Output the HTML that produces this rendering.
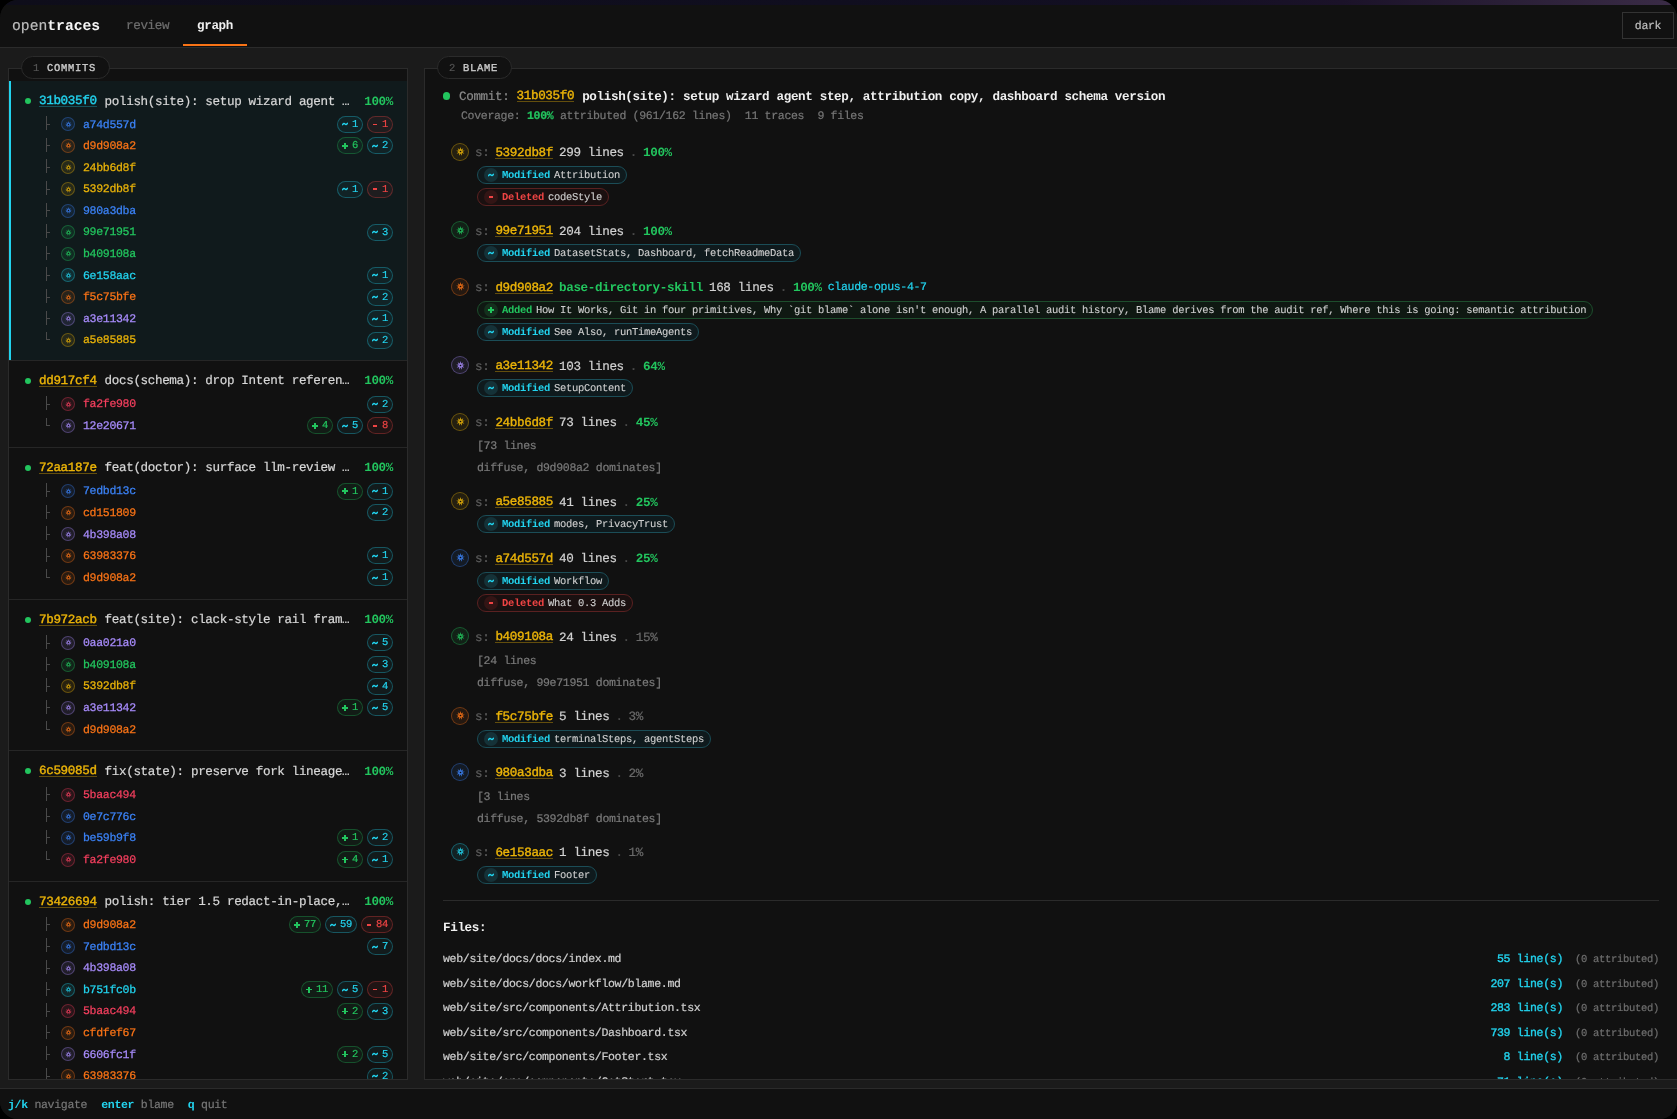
<!DOCTYPE html>
<html><head><meta charset="utf-8">
<style>
@font-face{font-family:"Liberation Mono";src:local("Liberation Mono"),local("LiberationMono");font-weight:400;ascent-override:102%;descent-override:30%;line-gap-override:0%}
@font-face{font-family:"Liberation Mono";src:local("Liberation Mono Bold"),local("LiberationMono-Bold");font-weight:700;ascent-override:102%;descent-override:30%;line-gap-override:0%}
*{box-sizing:border-box;margin:0;padding:0}
html,body{width:1677px;height:1119px;background:#000;overflow:hidden}
body{-webkit-font-smoothing:antialiased;text-rendering:geometricPrecision;-webkit-text-stroke:0.2px currentColor;font-family:"Liberation Mono",monospace;color:#d4d4d4;font-size:12.6px;letter-spacing:-0.36px}
.win{position:absolute;left:0;top:0;width:1677px;height:1119px;border-radius:18px;overflow:hidden;background:#111111;will-change:transform}
.topband{position:absolute;left:0;top:0;width:1677px;height:5px;background:linear-gradient(90deg,#0e0d1a 0%,#100e1f 50%,#130f23 70%,#1b1229 80%,#2a1f37 90%,#3b2c47 100%)}
.hdr{position:absolute;left:0;top:5px;width:1677px;height:43px;border-bottom:1px solid #2b2b2b;background:#111111}
.brand{position:absolute;left:12px;top:11.5px;font-size:14.7px;letter-spacing:-0.42px;line-height:18px;color:#bdbdbd;letter-spacing:0}
.brand b{color:#f5f5f5;font-weight:700}
.tab{position:absolute;top:0;height:42px;line-height:40px;font-size:12.6px;letter-spacing:-0.36px;padding:0 14px}
.t1{left:112px;color:#6f6f6f}
.t2{left:183px;color:#f0f0f0;font-weight:700}
.t2:after{content:"";position:absolute;left:0;right:0;top:39px;height:2px;background:#f97316}
.dark{position:absolute;left:1622px;top:7px;width:52px;height:27px;border:1px solid #333;font-size:11.55px;letter-spacing:-0.33px;line-height:26px;text-align:center;color:#bdbdbd}
.main{position:absolute;left:0;top:48px;width:1677px;height:1040px;background:#1b1b1b}
.panel{position:absolute;top:20px;border:1px solid #2b2b2b;background:#111111;overflow:hidden}
.pl{left:8px;width:400px;height:1012px}
.prt{left:424px;width:1260px;height:1012px}
.legend{position:absolute;top:8px;height:23px;border:1px solid #2b2b2b;border-radius:12px;background:#111111;font-size:10.5px;line-height:23px;padding:0 12.5px 0 11px;letter-spacing:0.7px;color:#c8c8c8;font-weight:400;-webkit-text-stroke:0.35px currentColor;z-index:5}
.legend i{font-style:normal;color:#555;font-weight:400;-webkit-text-stroke:0.2px currentColor}
.lg1{left:21px}.lg2{left:437px}
.list{position:absolute;left:0;top:12px;width:398px}
.commit{position:relative;padding:9.5px 14px 10.3px 16px;border-bottom:1px solid #262626}
.commit.sel{background:#101a1c;padding-bottom:8.9px}
.commit.sel:before{content:"";position:absolute;left:0;top:0;bottom:0;width:2px;background:#22d3ee}
.ch{height:23px;display:flex;align-items:center;gap:8px;line-height:23px}
.dot{width:6px;height:6px;border-radius:3px;background:#22c55e;flex:none;position:relative;top:-1px}
.hash{color:#eab308;font-weight:400;-webkit-text-stroke:0.4px currentColor;line-height:14px;flex:none;position:relative;top:-2px}
.hash:after{content:"";position:absolute;left:0;right:0;top:13px;height:1px;background:rgba(234,179,8,.38)}
.sel .hash{color:#22d3ee}.sel .hash:after{background:rgba(34,211,238,.3)}
.msg{flex:1;white-space:nowrap;overflow:hidden;color:#d8d8d8;position:relative;top:-2px}
.pct{color:#22c55e;font-weight:700;flex:none;position:relative;top:-2px}
.kid{position:relative;height:21.6px;line-height:21.6px;font-size:11.55px;letter-spacing:-0.33px}
.tr{position:absolute;left:21px;top:2.75px;width:1px;height:14px;background:#4a4a4a}
.tr:after{content:"";position:absolute;left:1px;top:7.6px;width:3px;height:1px;background:#4a4a4a}
.tr.last{height:8.5px;top:2.5px}
.tr.last:after{top:7.5px}
.av{position:absolute;left:36px;top:3.8px;width:14px;height:14px;border-radius:7px;border:1px solid color-mix(in srgb,var(--c) 34%,transparent);background:color-mix(in srgb,var(--c) 10%,transparent);display:flex;align-items:center;justify-content:center}
.av svg{width:7px;height:7px;opacity:.75}
.kh{position:absolute;left:58px;top:0;font-weight:400;-webkit-text-stroke:0.25px currentColor}
.pills{position:absolute;right:0;top:2.3px;display:flex;gap:4px}
.pill{height:17px;border-radius:999px;border:1px solid;padding:0 4px;display:flex;align-items:center;gap:4px;font-size:10.5px;letter-spacing:-0.3px;line-height:15px}
.pill b,.pill i{font-style:normal;font-weight:400}
.tl{display:block;width:6px;height:4px}
.mn{display:block;width:4px;height:1.5px;background:currentColor;margin:0 1px}
.plus{display:block;width:6px;height:6px;position:relative}.plus:before,.plus:after{content:"";position:absolute;background:currentColor}.plus:before{left:0;top:2.25px;width:6px;height:1.5px}.plus:after{left:2.25px;top:0;width:1.5px;height:6px}
.pg{color:#22c55e;border-color:rgba(34,197,94,.32);background:rgba(34,197,94,.06)}
.pc{color:#22d3ee;border-color:rgba(34,211,238,.32);background:rgba(34,211,238,.05)}
.prd{color:#ef4444}
.pill.prd{border-color:rgba(239,68,68,.32);background:rgba(239,68,68,.07)}
.bcontent{position:absolute;left:18px;top:0;width:1216px}
.bc{position:relative;height:27px;margin-top:13px;font-size:12.6px;letter-spacing:-0.36px;line-height:27px;display:flex;align-items:center;white-space:nowrap}
.bc .dot{width:7px;height:8px;border-radius:4px;margin-right:9px;top:0}
.bc .lab{color:#8a8a8a;margin-right:7.2px}
.bc .hash{color:#eab308;margin-right:8px;top:-1px}
.bc .title{color:#f0f0f0;font-weight:700}
.cov{font-size:11.55px;letter-spacing:-0.33px;color:#777;height:20px;line-height:20px;margin-top:-3px;white-space:pre;padding-left:18px}
.cov .g{color:#22c55e;font-weight:700}
.bis{margin-top:16.75px;padding-left:8px;padding-bottom:0.75px}
.bi{margin-bottom:11px}
.bhd{height:18px;display:flex;align-items:center;gap:6px;font-size:12.6px;letter-spacing:-0.36px;white-space:nowrap}
.bav{width:18px;height:18px;border-radius:9px;border:1px solid color-mix(in srgb,var(--c) 36%,transparent);background:color-mix(in srgb,var(--c) 9%,transparent);display:flex;align-items:center;justify-content:center;flex:none}
.bav svg{width:9px;height:9px;opacity:.85}
.s{color:#5e5e5e}
.bh{color:#eab308;font-weight:400;-webkit-text-stroke:0.4px currentColor;line-height:14px;position:relative}
.bh:after{content:"";position:absolute;left:0;right:0;top:13px;height:1px;background:rgba(234,179,8,.38)}
.skill{color:#22c55e;font-weight:700}
.ln{color:#d2d2d2}
.dd{color:#4a4a4a}
.pgood{color:#22c55e;font-weight:700}
.pbad{color:#6a6a6a}
.model{color:#22d3ee;font-size:11.55px;letter-spacing:-0.33px}
.chgs{display:flex;flex-direction:column;align-items:flex-start;gap:4px;padding-top:5px;padding-bottom:4.5px;padding-left:26px}
.chg{height:18px;border:1px solid;border-radius:9px;display:inline-flex;align-items:center;font-size:10.5px;letter-spacing:-0.3px;padding:0 6px 0 6px;white-space:nowrap;vertical-align:top}
.chgs .chg{display:flex;width:max-content}
.ci{width:14px;height:14px;border-radius:7px;display:flex;align-items:center;justify-content:center;font-weight:700;margin-right:4px}
.cl{font-weight:700;margin-right:4px}
.ct{color:#cfcfcf;-webkit-text-stroke:0.1px currentColor}
.cm{border-color:#1b4d57;background:#0f1a1d;color:#22d3ee}
.cm .ci{background:#153238}
.ca{border-color:#1d4d2c;background:#0f1812;color:#22c55e}
.ca .ci{background:#14301d}
.cd{border-color:#5a2121;background:#1a1010;color:#ef4444}
.cd .ci{background:#331515}
.txt{padding-top:4.5px;padding-left:26px;font-size:11.55px;letter-spacing:-0.33px;color:#7a7a7a;line-height:22px;padding-bottom:2px}
.files{border-top:1px solid #2b2b2b;padding-top:15px}
.fh{font-weight:700;color:#f0f0f0;height:24px;line-height:22px;font-size:12.6px;letter-spacing:-0.36px;margin-bottom:7px}
.fr{height:24.5px;line-height:24.5px;display:flex;font-size:11.55px;letter-spacing:-0.33px;white-space:nowrap}
.fn{flex:1;color:#cfcfcf}
.fl{color:#22d3ee;font-weight:400;-webkit-text-stroke:0.35px currentColor}
.fa{color:#6f6f6f;font-size:10.5px;letter-spacing:-0.3px;margin-left:12px}
.status{position:absolute;left:0;top:1088px;width:1677px;height:31px;border-top:1px solid #2b2b2b;background:#111111;font-size:11.55px;letter-spacing:-0.33px;line-height:32px;padding-left:8px;white-space:pre;color:#777}
.status b{color:#22d3ee;font-weight:700}
.sg{margin-right:14px}
b,strong,[style*="700"]{}
.pct,.t2,.brand b,.title,.skill,.pgood,.cl,.fh,.status b,.ci{-webkit-text-stroke:0}
</style></head><body>
<div class="win">
<div class="topband"></div>
<div class="hdr">
  <div class="brand">open<b>traces</b></div>
  <div class="tab t1">review</div>
  <div class="tab t2">graph</div>
  <div class="dark">dark</div>
</div>
<div class="main">
  <div class="legend lg1"><i>1</i> COMMITS</div>
  <div class="legend lg2"><i>2</i> BLAME</div>
  <div class="panel pl"><div class="list"><div class="commit sel"><div class="ch"><span class="dot"></span><span class="hash">31b035f0</span><span class="msg">polish(site): setup wizard agent …</span><span class="pct">100%</span></div><div class="kid"><span class="tr"></span><span class="av" style="--c:#3b82f6"><svg width="7" height="7" viewBox="0 0 10 10"><path fill="#3b82f6" d="M5.00 0.10 L5.79 2.84 L8.15 1.25 L6.99 3.85 L9.83 4.15 L7.27 5.40 L9.24 7.45 L6.48 6.76 L6.68 9.60 L5.00 7.30 L3.32 9.60 L3.52 6.76 L0.76 7.45 L2.73 5.40 L0.17 4.15 L3.01 3.85 L1.85 1.25 L4.21 2.84Z"/><circle cx="5" cy="5" r="0.9" fill="#0c0c0c"/></svg></span><span class="kh" style="color:#3b82f6">a74d557d</span><span class="pills"><span class="pill pc"><b><svg class="tl" viewBox="0 0 6 4"><path d="M0.6 2.7 C1.4 1.2 2.3 1.2 3 2 C3.7 2.8 4.6 2.8 5.4 1.3" fill="none" stroke="currentColor" stroke-width="1.45" stroke-linecap="round"/></svg></b><i>1</i></span><span class="pill prd"><b><span class="mn"></span></b><i>1</i></span></span></div><div class="kid"><span class="tr"></span><span class="av" style="--c:#f97316"><svg width="7" height="7" viewBox="0 0 10 10"><path fill="#f97316" d="M5.00 0.10 L5.79 2.84 L8.15 1.25 L6.99 3.85 L9.83 4.15 L7.27 5.40 L9.24 7.45 L6.48 6.76 L6.68 9.60 L5.00 7.30 L3.32 9.60 L3.52 6.76 L0.76 7.45 L2.73 5.40 L0.17 4.15 L3.01 3.85 L1.85 1.25 L4.21 2.84Z"/><circle cx="5" cy="5" r="0.9" fill="#0c0c0c"/></svg></span><span class="kh" style="color:#f97316">d9d908a2</span><span class="pills"><span class="pill pg"><b><span class="plus"></span></b><i>6</i></span><span class="pill pc"><b><svg class="tl" viewBox="0 0 6 4"><path d="M0.6 2.7 C1.4 1.2 2.3 1.2 3 2 C3.7 2.8 4.6 2.8 5.4 1.3" fill="none" stroke="currentColor" stroke-width="1.45" stroke-linecap="round"/></svg></b><i>2</i></span></span></div><div class="kid"><span class="tr"></span><span class="av" style="--c:#eab308"><svg width="7" height="7" viewBox="0 0 10 10"><path fill="#eab308" d="M5.00 0.10 L5.79 2.84 L8.15 1.25 L6.99 3.85 L9.83 4.15 L7.27 5.40 L9.24 7.45 L6.48 6.76 L6.68 9.60 L5.00 7.30 L3.32 9.60 L3.52 6.76 L0.76 7.45 L2.73 5.40 L0.17 4.15 L3.01 3.85 L1.85 1.25 L4.21 2.84Z"/><circle cx="5" cy="5" r="0.9" fill="#0c0c0c"/></svg></span><span class="kh" style="color:#eab308">24bb6d8f</span><span class="pills"></span></div><div class="kid"><span class="tr"></span><span class="av" style="--c:#eab308"><svg width="7" height="7" viewBox="0 0 10 10"><path fill="#eab308" d="M5.00 0.10 L5.79 2.84 L8.15 1.25 L6.99 3.85 L9.83 4.15 L7.27 5.40 L9.24 7.45 L6.48 6.76 L6.68 9.60 L5.00 7.30 L3.32 9.60 L3.52 6.76 L0.76 7.45 L2.73 5.40 L0.17 4.15 L3.01 3.85 L1.85 1.25 L4.21 2.84Z"/><circle cx="5" cy="5" r="0.9" fill="#0c0c0c"/></svg></span><span class="kh" style="color:#eab308">5392db8f</span><span class="pills"><span class="pill pc"><b><svg class="tl" viewBox="0 0 6 4"><path d="M0.6 2.7 C1.4 1.2 2.3 1.2 3 2 C3.7 2.8 4.6 2.8 5.4 1.3" fill="none" stroke="currentColor" stroke-width="1.45" stroke-linecap="round"/></svg></b><i>1</i></span><span class="pill prd"><b><span class="mn"></span></b><i>1</i></span></span></div><div class="kid"><span class="tr"></span><span class="av" style="--c:#3b82f6"><svg width="7" height="7" viewBox="0 0 10 10"><path fill="#3b82f6" d="M5.00 0.10 L5.79 2.84 L8.15 1.25 L6.99 3.85 L9.83 4.15 L7.27 5.40 L9.24 7.45 L6.48 6.76 L6.68 9.60 L5.00 7.30 L3.32 9.60 L3.52 6.76 L0.76 7.45 L2.73 5.40 L0.17 4.15 L3.01 3.85 L1.85 1.25 L4.21 2.84Z"/><circle cx="5" cy="5" r="0.9" fill="#0c0c0c"/></svg></span><span class="kh" style="color:#3b82f6">980a3dba</span><span class="pills"></span></div><div class="kid"><span class="tr"></span><span class="av" style="--c:#22c55e"><svg width="7" height="7" viewBox="0 0 10 10"><path fill="#22c55e" d="M5.00 0.10 L5.79 2.84 L8.15 1.25 L6.99 3.85 L9.83 4.15 L7.27 5.40 L9.24 7.45 L6.48 6.76 L6.68 9.60 L5.00 7.30 L3.32 9.60 L3.52 6.76 L0.76 7.45 L2.73 5.40 L0.17 4.15 L3.01 3.85 L1.85 1.25 L4.21 2.84Z"/><circle cx="5" cy="5" r="0.9" fill="#0c0c0c"/></svg></span><span class="kh" style="color:#22c55e">99e71951</span><span class="pills"><span class="pill pc"><b><svg class="tl" viewBox="0 0 6 4"><path d="M0.6 2.7 C1.4 1.2 2.3 1.2 3 2 C3.7 2.8 4.6 2.8 5.4 1.3" fill="none" stroke="currentColor" stroke-width="1.45" stroke-linecap="round"/></svg></b><i>3</i></span></span></div><div class="kid"><span class="tr"></span><span class="av" style="--c:#22c55e"><svg width="7" height="7" viewBox="0 0 10 10"><path fill="#22c55e" d="M5.00 0.10 L5.79 2.84 L8.15 1.25 L6.99 3.85 L9.83 4.15 L7.27 5.40 L9.24 7.45 L6.48 6.76 L6.68 9.60 L5.00 7.30 L3.32 9.60 L3.52 6.76 L0.76 7.45 L2.73 5.40 L0.17 4.15 L3.01 3.85 L1.85 1.25 L4.21 2.84Z"/><circle cx="5" cy="5" r="0.9" fill="#0c0c0c"/></svg></span><span class="kh" style="color:#22c55e">b409108a</span><span class="pills"></span></div><div class="kid"><span class="tr"></span><span class="av" style="--c:#22d3ee"><svg width="7" height="7" viewBox="0 0 10 10"><path fill="#22d3ee" d="M5.00 0.10 L5.79 2.84 L8.15 1.25 L6.99 3.85 L9.83 4.15 L7.27 5.40 L9.24 7.45 L6.48 6.76 L6.68 9.60 L5.00 7.30 L3.32 9.60 L3.52 6.76 L0.76 7.45 L2.73 5.40 L0.17 4.15 L3.01 3.85 L1.85 1.25 L4.21 2.84Z"/><circle cx="5" cy="5" r="0.9" fill="#0c0c0c"/></svg></span><span class="kh" style="color:#22d3ee">6e158aac</span><span class="pills"><span class="pill pc"><b><svg class="tl" viewBox="0 0 6 4"><path d="M0.6 2.7 C1.4 1.2 2.3 1.2 3 2 C3.7 2.8 4.6 2.8 5.4 1.3" fill="none" stroke="currentColor" stroke-width="1.45" stroke-linecap="round"/></svg></b><i>1</i></span></span></div><div class="kid"><span class="tr"></span><span class="av" style="--c:#f97316"><svg width="7" height="7" viewBox="0 0 10 10"><path fill="#f97316" d="M5.00 0.10 L5.79 2.84 L8.15 1.25 L6.99 3.85 L9.83 4.15 L7.27 5.40 L9.24 7.45 L6.48 6.76 L6.68 9.60 L5.00 7.30 L3.32 9.60 L3.52 6.76 L0.76 7.45 L2.73 5.40 L0.17 4.15 L3.01 3.85 L1.85 1.25 L4.21 2.84Z"/><circle cx="5" cy="5" r="0.9" fill="#0c0c0c"/></svg></span><span class="kh" style="color:#f97316">f5c75bfe</span><span class="pills"><span class="pill pc"><b><svg class="tl" viewBox="0 0 6 4"><path d="M0.6 2.7 C1.4 1.2 2.3 1.2 3 2 C3.7 2.8 4.6 2.8 5.4 1.3" fill="none" stroke="currentColor" stroke-width="1.45" stroke-linecap="round"/></svg></b><i>2</i></span></span></div><div class="kid"><span class="tr"></span><span class="av" style="--c:#a78bfa"><svg width="7" height="7" viewBox="0 0 10 10"><path fill="#a78bfa" d="M5.00 0.10 L5.79 2.84 L8.15 1.25 L6.99 3.85 L9.83 4.15 L7.27 5.40 L9.24 7.45 L6.48 6.76 L6.68 9.60 L5.00 7.30 L3.32 9.60 L3.52 6.76 L0.76 7.45 L2.73 5.40 L0.17 4.15 L3.01 3.85 L1.85 1.25 L4.21 2.84Z"/><circle cx="5" cy="5" r="0.9" fill="#0c0c0c"/></svg></span><span class="kh" style="color:#a78bfa">a3e11342</span><span class="pills"><span class="pill pc"><b><svg class="tl" viewBox="0 0 6 4"><path d="M0.6 2.7 C1.4 1.2 2.3 1.2 3 2 C3.7 2.8 4.6 2.8 5.4 1.3" fill="none" stroke="currentColor" stroke-width="1.45" stroke-linecap="round"/></svg></b><i>1</i></span></span></div><div class="kid"><span class="tr last"></span><span class="av" style="--c:#eab308"><svg width="7" height="7" viewBox="0 0 10 10"><path fill="#eab308" d="M5.00 0.10 L5.79 2.84 L8.15 1.25 L6.99 3.85 L9.83 4.15 L7.27 5.40 L9.24 7.45 L6.48 6.76 L6.68 9.60 L5.00 7.30 L3.32 9.60 L3.52 6.76 L0.76 7.45 L2.73 5.40 L0.17 4.15 L3.01 3.85 L1.85 1.25 L4.21 2.84Z"/><circle cx="5" cy="5" r="0.9" fill="#0c0c0c"/></svg></span><span class="kh" style="color:#eab308">a5e85885</span><span class="pills"><span class="pill pc"><b><svg class="tl" viewBox="0 0 6 4"><path d="M0.6 2.7 C1.4 1.2 2.3 1.2 3 2 C3.7 2.8 4.6 2.8 5.4 1.3" fill="none" stroke="currentColor" stroke-width="1.45" stroke-linecap="round"/></svg></b><i>2</i></span></span></div></div><div class="commit"><div class="ch"><span class="dot"></span><span class="hash">dd917cf4</span><span class="msg">docs(schema): drop Intent referen…</span><span class="pct">100%</span></div><div class="kid"><span class="tr"></span><span class="av" style="--c:#f43f5e"><svg width="7" height="7" viewBox="0 0 10 10"><path fill="#f43f5e" d="M5.00 0.10 L5.79 2.84 L8.15 1.25 L6.99 3.85 L9.83 4.15 L7.27 5.40 L9.24 7.45 L6.48 6.76 L6.68 9.60 L5.00 7.30 L3.32 9.60 L3.52 6.76 L0.76 7.45 L2.73 5.40 L0.17 4.15 L3.01 3.85 L1.85 1.25 L4.21 2.84Z"/><circle cx="5" cy="5" r="0.9" fill="#0c0c0c"/></svg></span><span class="kh" style="color:#f43f5e">fa2fe980</span><span class="pills"><span class="pill pc"><b><svg class="tl" viewBox="0 0 6 4"><path d="M0.6 2.7 C1.4 1.2 2.3 1.2 3 2 C3.7 2.8 4.6 2.8 5.4 1.3" fill="none" stroke="currentColor" stroke-width="1.45" stroke-linecap="round"/></svg></b><i>2</i></span></span></div><div class="kid"><span class="tr last"></span><span class="av" style="--c:#a78bfa"><svg width="7" height="7" viewBox="0 0 10 10"><path fill="#a78bfa" d="M5.00 0.10 L5.79 2.84 L8.15 1.25 L6.99 3.85 L9.83 4.15 L7.27 5.40 L9.24 7.45 L6.48 6.76 L6.68 9.60 L5.00 7.30 L3.32 9.60 L3.52 6.76 L0.76 7.45 L2.73 5.40 L0.17 4.15 L3.01 3.85 L1.85 1.25 L4.21 2.84Z"/><circle cx="5" cy="5" r="0.9" fill="#0c0c0c"/></svg></span><span class="kh" style="color:#a78bfa">12e20671</span><span class="pills"><span class="pill pg"><b><span class="plus"></span></b><i>4</i></span><span class="pill pc"><b><svg class="tl" viewBox="0 0 6 4"><path d="M0.6 2.7 C1.4 1.2 2.3 1.2 3 2 C3.7 2.8 4.6 2.8 5.4 1.3" fill="none" stroke="currentColor" stroke-width="1.45" stroke-linecap="round"/></svg></b><i>5</i></span><span class="pill prd"><b><span class="mn"></span></b><i>8</i></span></span></div></div><div class="commit"><div class="ch"><span class="dot"></span><span class="hash">72aa187e</span><span class="msg">feat(doctor): surface llm-review …</span><span class="pct">100%</span></div><div class="kid"><span class="tr"></span><span class="av" style="--c:#3b82f6"><svg width="7" height="7" viewBox="0 0 10 10"><path fill="#3b82f6" d="M5.00 0.10 L5.79 2.84 L8.15 1.25 L6.99 3.85 L9.83 4.15 L7.27 5.40 L9.24 7.45 L6.48 6.76 L6.68 9.60 L5.00 7.30 L3.32 9.60 L3.52 6.76 L0.76 7.45 L2.73 5.40 L0.17 4.15 L3.01 3.85 L1.85 1.25 L4.21 2.84Z"/><circle cx="5" cy="5" r="0.9" fill="#0c0c0c"/></svg></span><span class="kh" style="color:#3b82f6">7edbd13c</span><span class="pills"><span class="pill pg"><b><span class="plus"></span></b><i>1</i></span><span class="pill pc"><b><svg class="tl" viewBox="0 0 6 4"><path d="M0.6 2.7 C1.4 1.2 2.3 1.2 3 2 C3.7 2.8 4.6 2.8 5.4 1.3" fill="none" stroke="currentColor" stroke-width="1.45" stroke-linecap="round"/></svg></b><i>1</i></span></span></div><div class="kid"><span class="tr"></span><span class="av" style="--c:#f97316"><svg width="7" height="7" viewBox="0 0 10 10"><path fill="#f97316" d="M5.00 0.10 L5.79 2.84 L8.15 1.25 L6.99 3.85 L9.83 4.15 L7.27 5.40 L9.24 7.45 L6.48 6.76 L6.68 9.60 L5.00 7.30 L3.32 9.60 L3.52 6.76 L0.76 7.45 L2.73 5.40 L0.17 4.15 L3.01 3.85 L1.85 1.25 L4.21 2.84Z"/><circle cx="5" cy="5" r="0.9" fill="#0c0c0c"/></svg></span><span class="kh" style="color:#f97316">cd151809</span><span class="pills"><span class="pill pc"><b><svg class="tl" viewBox="0 0 6 4"><path d="M0.6 2.7 C1.4 1.2 2.3 1.2 3 2 C3.7 2.8 4.6 2.8 5.4 1.3" fill="none" stroke="currentColor" stroke-width="1.45" stroke-linecap="round"/></svg></b><i>2</i></span></span></div><div class="kid"><span class="tr"></span><span class="av" style="--c:#a78bfa"><svg width="7" height="7" viewBox="0 0 10 10"><path fill="#a78bfa" d="M5.00 0.10 L5.79 2.84 L8.15 1.25 L6.99 3.85 L9.83 4.15 L7.27 5.40 L9.24 7.45 L6.48 6.76 L6.68 9.60 L5.00 7.30 L3.32 9.60 L3.52 6.76 L0.76 7.45 L2.73 5.40 L0.17 4.15 L3.01 3.85 L1.85 1.25 L4.21 2.84Z"/><circle cx="5" cy="5" r="0.9" fill="#0c0c0c"/></svg></span><span class="kh" style="color:#a78bfa">4b398a08</span><span class="pills"></span></div><div class="kid"><span class="tr"></span><span class="av" style="--c:#f97316"><svg width="7" height="7" viewBox="0 0 10 10"><path fill="#f97316" d="M5.00 0.10 L5.79 2.84 L8.15 1.25 L6.99 3.85 L9.83 4.15 L7.27 5.40 L9.24 7.45 L6.48 6.76 L6.68 9.60 L5.00 7.30 L3.32 9.60 L3.52 6.76 L0.76 7.45 L2.73 5.40 L0.17 4.15 L3.01 3.85 L1.85 1.25 L4.21 2.84Z"/><circle cx="5" cy="5" r="0.9" fill="#0c0c0c"/></svg></span><span class="kh" style="color:#f97316">63983376</span><span class="pills"><span class="pill pc"><b><svg class="tl" viewBox="0 0 6 4"><path d="M0.6 2.7 C1.4 1.2 2.3 1.2 3 2 C3.7 2.8 4.6 2.8 5.4 1.3" fill="none" stroke="currentColor" stroke-width="1.45" stroke-linecap="round"/></svg></b><i>1</i></span></span></div><div class="kid"><span class="tr last"></span><span class="av" style="--c:#f97316"><svg width="7" height="7" viewBox="0 0 10 10"><path fill="#f97316" d="M5.00 0.10 L5.79 2.84 L8.15 1.25 L6.99 3.85 L9.83 4.15 L7.27 5.40 L9.24 7.45 L6.48 6.76 L6.68 9.60 L5.00 7.30 L3.32 9.60 L3.52 6.76 L0.76 7.45 L2.73 5.40 L0.17 4.15 L3.01 3.85 L1.85 1.25 L4.21 2.84Z"/><circle cx="5" cy="5" r="0.9" fill="#0c0c0c"/></svg></span><span class="kh" style="color:#f97316">d9d908a2</span><span class="pills"><span class="pill pc"><b><svg class="tl" viewBox="0 0 6 4"><path d="M0.6 2.7 C1.4 1.2 2.3 1.2 3 2 C3.7 2.8 4.6 2.8 5.4 1.3" fill="none" stroke="currentColor" stroke-width="1.45" stroke-linecap="round"/></svg></b><i>1</i></span></span></div></div><div class="commit"><div class="ch"><span class="dot"></span><span class="hash">7b972acb</span><span class="msg">feat(site): clack-style rail fram…</span><span class="pct">100%</span></div><div class="kid"><span class="tr"></span><span class="av" style="--c:#a78bfa"><svg width="7" height="7" viewBox="0 0 10 10"><path fill="#a78bfa" d="M5.00 0.10 L5.79 2.84 L8.15 1.25 L6.99 3.85 L9.83 4.15 L7.27 5.40 L9.24 7.45 L6.48 6.76 L6.68 9.60 L5.00 7.30 L3.32 9.60 L3.52 6.76 L0.76 7.45 L2.73 5.40 L0.17 4.15 L3.01 3.85 L1.85 1.25 L4.21 2.84Z"/><circle cx="5" cy="5" r="0.9" fill="#0c0c0c"/></svg></span><span class="kh" style="color:#a78bfa">0aa021a0</span><span class="pills"><span class="pill pc"><b><svg class="tl" viewBox="0 0 6 4"><path d="M0.6 2.7 C1.4 1.2 2.3 1.2 3 2 C3.7 2.8 4.6 2.8 5.4 1.3" fill="none" stroke="currentColor" stroke-width="1.45" stroke-linecap="round"/></svg></b><i>5</i></span></span></div><div class="kid"><span class="tr"></span><span class="av" style="--c:#22c55e"><svg width="7" height="7" viewBox="0 0 10 10"><path fill="#22c55e" d="M5.00 0.10 L5.79 2.84 L8.15 1.25 L6.99 3.85 L9.83 4.15 L7.27 5.40 L9.24 7.45 L6.48 6.76 L6.68 9.60 L5.00 7.30 L3.32 9.60 L3.52 6.76 L0.76 7.45 L2.73 5.40 L0.17 4.15 L3.01 3.85 L1.85 1.25 L4.21 2.84Z"/><circle cx="5" cy="5" r="0.9" fill="#0c0c0c"/></svg></span><span class="kh" style="color:#22c55e">b409108a</span><span class="pills"><span class="pill pc"><b><svg class="tl" viewBox="0 0 6 4"><path d="M0.6 2.7 C1.4 1.2 2.3 1.2 3 2 C3.7 2.8 4.6 2.8 5.4 1.3" fill="none" stroke="currentColor" stroke-width="1.45" stroke-linecap="round"/></svg></b><i>3</i></span></span></div><div class="kid"><span class="tr"></span><span class="av" style="--c:#eab308"><svg width="7" height="7" viewBox="0 0 10 10"><path fill="#eab308" d="M5.00 0.10 L5.79 2.84 L8.15 1.25 L6.99 3.85 L9.83 4.15 L7.27 5.40 L9.24 7.45 L6.48 6.76 L6.68 9.60 L5.00 7.30 L3.32 9.60 L3.52 6.76 L0.76 7.45 L2.73 5.40 L0.17 4.15 L3.01 3.85 L1.85 1.25 L4.21 2.84Z"/><circle cx="5" cy="5" r="0.9" fill="#0c0c0c"/></svg></span><span class="kh" style="color:#eab308">5392db8f</span><span class="pills"><span class="pill pc"><b><svg class="tl" viewBox="0 0 6 4"><path d="M0.6 2.7 C1.4 1.2 2.3 1.2 3 2 C3.7 2.8 4.6 2.8 5.4 1.3" fill="none" stroke="currentColor" stroke-width="1.45" stroke-linecap="round"/></svg></b><i>4</i></span></span></div><div class="kid"><span class="tr"></span><span class="av" style="--c:#a78bfa"><svg width="7" height="7" viewBox="0 0 10 10"><path fill="#a78bfa" d="M5.00 0.10 L5.79 2.84 L8.15 1.25 L6.99 3.85 L9.83 4.15 L7.27 5.40 L9.24 7.45 L6.48 6.76 L6.68 9.60 L5.00 7.30 L3.32 9.60 L3.52 6.76 L0.76 7.45 L2.73 5.40 L0.17 4.15 L3.01 3.85 L1.85 1.25 L4.21 2.84Z"/><circle cx="5" cy="5" r="0.9" fill="#0c0c0c"/></svg></span><span class="kh" style="color:#a78bfa">a3e11342</span><span class="pills"><span class="pill pg"><b><span class="plus"></span></b><i>1</i></span><span class="pill pc"><b><svg class="tl" viewBox="0 0 6 4"><path d="M0.6 2.7 C1.4 1.2 2.3 1.2 3 2 C3.7 2.8 4.6 2.8 5.4 1.3" fill="none" stroke="currentColor" stroke-width="1.45" stroke-linecap="round"/></svg></b><i>5</i></span></span></div><div class="kid"><span class="tr last"></span><span class="av" style="--c:#f97316"><svg width="7" height="7" viewBox="0 0 10 10"><path fill="#f97316" d="M5.00 0.10 L5.79 2.84 L8.15 1.25 L6.99 3.85 L9.83 4.15 L7.27 5.40 L9.24 7.45 L6.48 6.76 L6.68 9.60 L5.00 7.30 L3.32 9.60 L3.52 6.76 L0.76 7.45 L2.73 5.40 L0.17 4.15 L3.01 3.85 L1.85 1.25 L4.21 2.84Z"/><circle cx="5" cy="5" r="0.9" fill="#0c0c0c"/></svg></span><span class="kh" style="color:#f97316">d9d908a2</span><span class="pills"></span></div></div><div class="commit"><div class="ch"><span class="dot"></span><span class="hash">6c59085d</span><span class="msg">fix(state): preserve fork lineage…</span><span class="pct">100%</span></div><div class="kid"><span class="tr"></span><span class="av" style="--c:#f43f5e"><svg width="7" height="7" viewBox="0 0 10 10"><path fill="#f43f5e" d="M5.00 0.10 L5.79 2.84 L8.15 1.25 L6.99 3.85 L9.83 4.15 L7.27 5.40 L9.24 7.45 L6.48 6.76 L6.68 9.60 L5.00 7.30 L3.32 9.60 L3.52 6.76 L0.76 7.45 L2.73 5.40 L0.17 4.15 L3.01 3.85 L1.85 1.25 L4.21 2.84Z"/><circle cx="5" cy="5" r="0.9" fill="#0c0c0c"/></svg></span><span class="kh" style="color:#f43f5e">5baac494</span><span class="pills"></span></div><div class="kid"><span class="tr"></span><span class="av" style="--c:#3b82f6"><svg width="7" height="7" viewBox="0 0 10 10"><path fill="#3b82f6" d="M5.00 0.10 L5.79 2.84 L8.15 1.25 L6.99 3.85 L9.83 4.15 L7.27 5.40 L9.24 7.45 L6.48 6.76 L6.68 9.60 L5.00 7.30 L3.32 9.60 L3.52 6.76 L0.76 7.45 L2.73 5.40 L0.17 4.15 L3.01 3.85 L1.85 1.25 L4.21 2.84Z"/><circle cx="5" cy="5" r="0.9" fill="#0c0c0c"/></svg></span><span class="kh" style="color:#3b82f6">0e7c776c</span><span class="pills"></span></div><div class="kid"><span class="tr"></span><span class="av" style="--c:#3b82f6"><svg width="7" height="7" viewBox="0 0 10 10"><path fill="#3b82f6" d="M5.00 0.10 L5.79 2.84 L8.15 1.25 L6.99 3.85 L9.83 4.15 L7.27 5.40 L9.24 7.45 L6.48 6.76 L6.68 9.60 L5.00 7.30 L3.32 9.60 L3.52 6.76 L0.76 7.45 L2.73 5.40 L0.17 4.15 L3.01 3.85 L1.85 1.25 L4.21 2.84Z"/><circle cx="5" cy="5" r="0.9" fill="#0c0c0c"/></svg></span><span class="kh" style="color:#3b82f6">be59b9f8</span><span class="pills"><span class="pill pg"><b><span class="plus"></span></b><i>1</i></span><span class="pill pc"><b><svg class="tl" viewBox="0 0 6 4"><path d="M0.6 2.7 C1.4 1.2 2.3 1.2 3 2 C3.7 2.8 4.6 2.8 5.4 1.3" fill="none" stroke="currentColor" stroke-width="1.45" stroke-linecap="round"/></svg></b><i>2</i></span></span></div><div class="kid"><span class="tr last"></span><span class="av" style="--c:#f43f5e"><svg width="7" height="7" viewBox="0 0 10 10"><path fill="#f43f5e" d="M5.00 0.10 L5.79 2.84 L8.15 1.25 L6.99 3.85 L9.83 4.15 L7.27 5.40 L9.24 7.45 L6.48 6.76 L6.68 9.60 L5.00 7.30 L3.32 9.60 L3.52 6.76 L0.76 7.45 L2.73 5.40 L0.17 4.15 L3.01 3.85 L1.85 1.25 L4.21 2.84Z"/><circle cx="5" cy="5" r="0.9" fill="#0c0c0c"/></svg></span><span class="kh" style="color:#f43f5e">fa2fe980</span><span class="pills"><span class="pill pg"><b><span class="plus"></span></b><i>4</i></span><span class="pill pc"><b><svg class="tl" viewBox="0 0 6 4"><path d="M0.6 2.7 C1.4 1.2 2.3 1.2 3 2 C3.7 2.8 4.6 2.8 5.4 1.3" fill="none" stroke="currentColor" stroke-width="1.45" stroke-linecap="round"/></svg></b><i>1</i></span></span></div></div><div class="commit"><div class="ch"><span class="dot"></span><span class="hash">73426694</span><span class="msg">polish: tier 1.5 redact-in-place,…</span><span class="pct">100%</span></div><div class="kid"><span class="tr"></span><span class="av" style="--c:#f97316"><svg width="7" height="7" viewBox="0 0 10 10"><path fill="#f97316" d="M5.00 0.10 L5.79 2.84 L8.15 1.25 L6.99 3.85 L9.83 4.15 L7.27 5.40 L9.24 7.45 L6.48 6.76 L6.68 9.60 L5.00 7.30 L3.32 9.60 L3.52 6.76 L0.76 7.45 L2.73 5.40 L0.17 4.15 L3.01 3.85 L1.85 1.25 L4.21 2.84Z"/><circle cx="5" cy="5" r="0.9" fill="#0c0c0c"/></svg></span><span class="kh" style="color:#f97316">d9d908a2</span><span class="pills"><span class="pill pg"><b><span class="plus"></span></b><i>77</i></span><span class="pill pc"><b><svg class="tl" viewBox="0 0 6 4"><path d="M0.6 2.7 C1.4 1.2 2.3 1.2 3 2 C3.7 2.8 4.6 2.8 5.4 1.3" fill="none" stroke="currentColor" stroke-width="1.45" stroke-linecap="round"/></svg></b><i>59</i></span><span class="pill prd"><b><span class="mn"></span></b><i>84</i></span></span></div><div class="kid"><span class="tr"></span><span class="av" style="--c:#3b82f6"><svg width="7" height="7" viewBox="0 0 10 10"><path fill="#3b82f6" d="M5.00 0.10 L5.79 2.84 L8.15 1.25 L6.99 3.85 L9.83 4.15 L7.27 5.40 L9.24 7.45 L6.48 6.76 L6.68 9.60 L5.00 7.30 L3.32 9.60 L3.52 6.76 L0.76 7.45 L2.73 5.40 L0.17 4.15 L3.01 3.85 L1.85 1.25 L4.21 2.84Z"/><circle cx="5" cy="5" r="0.9" fill="#0c0c0c"/></svg></span><span class="kh" style="color:#3b82f6">7edbd13c</span><span class="pills"><span class="pill pc"><b><svg class="tl" viewBox="0 0 6 4"><path d="M0.6 2.7 C1.4 1.2 2.3 1.2 3 2 C3.7 2.8 4.6 2.8 5.4 1.3" fill="none" stroke="currentColor" stroke-width="1.45" stroke-linecap="round"/></svg></b><i>7</i></span></span></div><div class="kid"><span class="tr"></span><span class="av" style="--c:#a78bfa"><svg width="7" height="7" viewBox="0 0 10 10"><path fill="#a78bfa" d="M5.00 0.10 L5.79 2.84 L8.15 1.25 L6.99 3.85 L9.83 4.15 L7.27 5.40 L9.24 7.45 L6.48 6.76 L6.68 9.60 L5.00 7.30 L3.32 9.60 L3.52 6.76 L0.76 7.45 L2.73 5.40 L0.17 4.15 L3.01 3.85 L1.85 1.25 L4.21 2.84Z"/><circle cx="5" cy="5" r="0.9" fill="#0c0c0c"/></svg></span><span class="kh" style="color:#a78bfa">4b398a08</span><span class="pills"></span></div><div class="kid"><span class="tr"></span><span class="av" style="--c:#22d3ee"><svg width="7" height="7" viewBox="0 0 10 10"><path fill="#22d3ee" d="M5.00 0.10 L5.79 2.84 L8.15 1.25 L6.99 3.85 L9.83 4.15 L7.27 5.40 L9.24 7.45 L6.48 6.76 L6.68 9.60 L5.00 7.30 L3.32 9.60 L3.52 6.76 L0.76 7.45 L2.73 5.40 L0.17 4.15 L3.01 3.85 L1.85 1.25 L4.21 2.84Z"/><circle cx="5" cy="5" r="0.9" fill="#0c0c0c"/></svg></span><span class="kh" style="color:#22d3ee">b751fc0b</span><span class="pills"><span class="pill pg"><b><span class="plus"></span></b><i>11</i></span><span class="pill pc"><b><svg class="tl" viewBox="0 0 6 4"><path d="M0.6 2.7 C1.4 1.2 2.3 1.2 3 2 C3.7 2.8 4.6 2.8 5.4 1.3" fill="none" stroke="currentColor" stroke-width="1.45" stroke-linecap="round"/></svg></b><i>5</i></span><span class="pill prd"><b><span class="mn"></span></b><i>1</i></span></span></div><div class="kid"><span class="tr"></span><span class="av" style="--c:#f43f5e"><svg width="7" height="7" viewBox="0 0 10 10"><path fill="#f43f5e" d="M5.00 0.10 L5.79 2.84 L8.15 1.25 L6.99 3.85 L9.83 4.15 L7.27 5.40 L9.24 7.45 L6.48 6.76 L6.68 9.60 L5.00 7.30 L3.32 9.60 L3.52 6.76 L0.76 7.45 L2.73 5.40 L0.17 4.15 L3.01 3.85 L1.85 1.25 L4.21 2.84Z"/><circle cx="5" cy="5" r="0.9" fill="#0c0c0c"/></svg></span><span class="kh" style="color:#f43f5e">5baac494</span><span class="pills"><span class="pill pg"><b><span class="plus"></span></b><i>2</i></span><span class="pill pc"><b><svg class="tl" viewBox="0 0 6 4"><path d="M0.6 2.7 C1.4 1.2 2.3 1.2 3 2 C3.7 2.8 4.6 2.8 5.4 1.3" fill="none" stroke="currentColor" stroke-width="1.45" stroke-linecap="round"/></svg></b><i>3</i></span></span></div><div class="kid"><span class="tr"></span><span class="av" style="--c:#f97316"><svg width="7" height="7" viewBox="0 0 10 10"><path fill="#f97316" d="M5.00 0.10 L5.79 2.84 L8.15 1.25 L6.99 3.85 L9.83 4.15 L7.27 5.40 L9.24 7.45 L6.48 6.76 L6.68 9.60 L5.00 7.30 L3.32 9.60 L3.52 6.76 L0.76 7.45 L2.73 5.40 L0.17 4.15 L3.01 3.85 L1.85 1.25 L4.21 2.84Z"/><circle cx="5" cy="5" r="0.9" fill="#0c0c0c"/></svg></span><span class="kh" style="color:#f97316">cfdfef67</span><span class="pills"></span></div><div class="kid"><span class="tr"></span><span class="av" style="--c:#a78bfa"><svg width="7" height="7" viewBox="0 0 10 10"><path fill="#a78bfa" d="M5.00 0.10 L5.79 2.84 L8.15 1.25 L6.99 3.85 L9.83 4.15 L7.27 5.40 L9.24 7.45 L6.48 6.76 L6.68 9.60 L5.00 7.30 L3.32 9.60 L3.52 6.76 L0.76 7.45 L2.73 5.40 L0.17 4.15 L3.01 3.85 L1.85 1.25 L4.21 2.84Z"/><circle cx="5" cy="5" r="0.9" fill="#0c0c0c"/></svg></span><span class="kh" style="color:#a78bfa">6606fc1f</span><span class="pills"><span class="pill pg"><b><span class="plus"></span></b><i>2</i></span><span class="pill pc"><b><svg class="tl" viewBox="0 0 6 4"><path d="M0.6 2.7 C1.4 1.2 2.3 1.2 3 2 C3.7 2.8 4.6 2.8 5.4 1.3" fill="none" stroke="currentColor" stroke-width="1.45" stroke-linecap="round"/></svg></b><i>5</i></span></span></div><div class="kid"><span class="tr"></span><span class="av" style="--c:#f97316"><svg width="7" height="7" viewBox="0 0 10 10"><path fill="#f97316" d="M5.00 0.10 L5.79 2.84 L8.15 1.25 L6.99 3.85 L9.83 4.15 L7.27 5.40 L9.24 7.45 L6.48 6.76 L6.68 9.60 L5.00 7.30 L3.32 9.60 L3.52 6.76 L0.76 7.45 L2.73 5.40 L0.17 4.15 L3.01 3.85 L1.85 1.25 L4.21 2.84Z"/><circle cx="5" cy="5" r="0.9" fill="#0c0c0c"/></svg></span><span class="kh" style="color:#f97316">63983376</span><span class="pills"><span class="pill pc"><b><svg class="tl" viewBox="0 0 6 4"><path d="M0.6 2.7 C1.4 1.2 2.3 1.2 3 2 C3.7 2.8 4.6 2.8 5.4 1.3" fill="none" stroke="currentColor" stroke-width="1.45" stroke-linecap="round"/></svg></b><i>2</i></span></span></div><div class="kid"><span class="tr last"></span><span class="av" style="--c:#3b82f6"><svg width="7" height="7" viewBox="0 0 10 10"><path fill="#3b82f6" d="M5.00 0.10 L5.79 2.84 L8.15 1.25 L6.99 3.85 L9.83 4.15 L7.27 5.40 L9.24 7.45 L6.48 6.76 L6.68 9.60 L5.00 7.30 L3.32 9.60 L3.52 6.76 L0.76 7.45 L2.73 5.40 L0.17 4.15 L3.01 3.85 L1.85 1.25 L4.21 2.84Z"/><circle cx="5" cy="5" r="0.9" fill="#0c0c0c"/></svg></span><span class="kh" style="color:#3b82f6">0e7c776c</span><span class="pills"></span></div></div></div></div>
  <div class="panel prt"><div class="bcontent">
    <div class="bc"><span class="dot"></span><span class="lab">Commit:</span><span class="hash">31b035f0</span><span class="title">polish(site): setup wizard agent step, attribution copy, dashboard schema version</span></div>
    <div class="cov">Coverage: <span class="g">100%</span> attributed (961/162 lines)  11 traces  9 files</div>
    <div class="bis"><div class="bi"><div class="bhd"><span class="bav" style="--c:#eab308"><svg width="7" height="7" viewBox="0 0 10 10"><path fill="#eab308" d="M5.00 0.10 L5.79 2.84 L8.15 1.25 L6.99 3.85 L9.83 4.15 L7.27 5.40 L9.24 7.45 L6.48 6.76 L6.68 9.60 L5.00 7.30 L3.32 9.60 L3.52 6.76 L0.76 7.45 L2.73 5.40 L0.17 4.15 L3.01 3.85 L1.85 1.25 L4.21 2.84Z"/><circle cx="5" cy="5" r="0.9" fill="#0c0c0c"/></svg></span><span class="s">s:</span><span class="bh">5392db8f</span><span class="ln">299 lines</span><span class="dd">.</span><span class="pgood">100%</span></div><div class="chgs"><div class="chg cm"><span class="ci"><svg class="tl" viewBox="0 0 6 4"><path d="M0.6 2.7 C1.4 1.2 2.3 1.2 3 2 C3.7 2.8 4.6 2.8 5.4 1.3" fill="none" stroke="currentColor" stroke-width="1.45" stroke-linecap="round"/></svg></span><span class="cl">Modified</span><span class="ct">Attribution</span></div><div class="chg cd"><span class="ci"><span class="mn"></span></span><span class="cl">Deleted</span><span class="ct">codeStyle</span></div></div></div><div class="bi"><div class="bhd"><span class="bav" style="--c:#22c55e"><svg width="7" height="7" viewBox="0 0 10 10"><path fill="#22c55e" d="M5.00 0.10 L5.79 2.84 L8.15 1.25 L6.99 3.85 L9.83 4.15 L7.27 5.40 L9.24 7.45 L6.48 6.76 L6.68 9.60 L5.00 7.30 L3.32 9.60 L3.52 6.76 L0.76 7.45 L2.73 5.40 L0.17 4.15 L3.01 3.85 L1.85 1.25 L4.21 2.84Z"/><circle cx="5" cy="5" r="0.9" fill="#0c0c0c"/></svg></span><span class="s">s:</span><span class="bh">99e71951</span><span class="ln">204 lines</span><span class="dd">.</span><span class="pgood">100%</span></div><div class="chgs"><div class="chg cm"><span class="ci"><svg class="tl" viewBox="0 0 6 4"><path d="M0.6 2.7 C1.4 1.2 2.3 1.2 3 2 C3.7 2.8 4.6 2.8 5.4 1.3" fill="none" stroke="currentColor" stroke-width="1.45" stroke-linecap="round"/></svg></span><span class="cl">Modified</span><span class="ct">DatasetStats, Dashboard, fetchReadmeData</span></div></div></div><div class="bi"><div class="bhd"><span class="bav" style="--c:#f97316"><svg width="7" height="7" viewBox="0 0 10 10"><path fill="#f97316" d="M5.00 0.10 L5.79 2.84 L8.15 1.25 L6.99 3.85 L9.83 4.15 L7.27 5.40 L9.24 7.45 L6.48 6.76 L6.68 9.60 L5.00 7.30 L3.32 9.60 L3.52 6.76 L0.76 7.45 L2.73 5.40 L0.17 4.15 L3.01 3.85 L1.85 1.25 L4.21 2.84Z"/><circle cx="5" cy="5" r="0.9" fill="#0c0c0c"/></svg></span><span class="s">s:</span><span class="bh">d9d908a2</span><span class="skill">base-directory-skill</span><span class="ln">168 lines</span><span class="dd">.</span><span class="pgood">100%</span><span class="model">claude-opus-4-7</span></div><div class="chgs"><div class="chg ca"><span class="ci"><span class="plus"></span></span><span class="cl">Added</span><span class="ct">How It Works, Git in four primitives, Why `git blame` alone isn&#x27;t enough, A parallel audit history, Blame derives from the audit ref, Where this is going: semantic attribution</span></div><div class="chg cm"><span class="ci"><svg class="tl" viewBox="0 0 6 4"><path d="M0.6 2.7 C1.4 1.2 2.3 1.2 3 2 C3.7 2.8 4.6 2.8 5.4 1.3" fill="none" stroke="currentColor" stroke-width="1.45" stroke-linecap="round"/></svg></span><span class="cl">Modified</span><span class="ct">See Also, runTimeAgents</span></div></div></div><div class="bi"><div class="bhd"><span class="bav" style="--c:#a78bfa"><svg width="7" height="7" viewBox="0 0 10 10"><path fill="#a78bfa" d="M5.00 0.10 L5.79 2.84 L8.15 1.25 L6.99 3.85 L9.83 4.15 L7.27 5.40 L9.24 7.45 L6.48 6.76 L6.68 9.60 L5.00 7.30 L3.32 9.60 L3.52 6.76 L0.76 7.45 L2.73 5.40 L0.17 4.15 L3.01 3.85 L1.85 1.25 L4.21 2.84Z"/><circle cx="5" cy="5" r="0.9" fill="#0c0c0c"/></svg></span><span class="s">s:</span><span class="bh">a3e11342</span><span class="ln">103 lines</span><span class="dd">.</span><span class="pgood">64%</span></div><div class="chgs"><div class="chg cm"><span class="ci"><svg class="tl" viewBox="0 0 6 4"><path d="M0.6 2.7 C1.4 1.2 2.3 1.2 3 2 C3.7 2.8 4.6 2.8 5.4 1.3" fill="none" stroke="currentColor" stroke-width="1.45" stroke-linecap="round"/></svg></span><span class="cl">Modified</span><span class="ct">SetupContent</span></div></div></div><div class="bi"><div class="bhd"><span class="bav" style="--c:#eab308"><svg width="7" height="7" viewBox="0 0 10 10"><path fill="#eab308" d="M5.00 0.10 L5.79 2.84 L8.15 1.25 L6.99 3.85 L9.83 4.15 L7.27 5.40 L9.24 7.45 L6.48 6.76 L6.68 9.60 L5.00 7.30 L3.32 9.60 L3.52 6.76 L0.76 7.45 L2.73 5.40 L0.17 4.15 L3.01 3.85 L1.85 1.25 L4.21 2.84Z"/><circle cx="5" cy="5" r="0.9" fill="#0c0c0c"/></svg></span><span class="s">s:</span><span class="bh">24bb6d8f</span><span class="ln">73 lines</span><span class="dd">.</span><span class="pgood">45%</span></div><div class="txt"><div>[73 lines</div><div>diffuse, d9d908a2 dominates]</div></div></div><div class="bi"><div class="bhd"><span class="bav" style="--c:#eab308"><svg width="7" height="7" viewBox="0 0 10 10"><path fill="#eab308" d="M5.00 0.10 L5.79 2.84 L8.15 1.25 L6.99 3.85 L9.83 4.15 L7.27 5.40 L9.24 7.45 L6.48 6.76 L6.68 9.60 L5.00 7.30 L3.32 9.60 L3.52 6.76 L0.76 7.45 L2.73 5.40 L0.17 4.15 L3.01 3.85 L1.85 1.25 L4.21 2.84Z"/><circle cx="5" cy="5" r="0.9" fill="#0c0c0c"/></svg></span><span class="s">s:</span><span class="bh">a5e85885</span><span class="ln">41 lines</span><span class="dd">.</span><span class="pgood">25%</span></div><div class="chgs"><div class="chg cm"><span class="ci"><svg class="tl" viewBox="0 0 6 4"><path d="M0.6 2.7 C1.4 1.2 2.3 1.2 3 2 C3.7 2.8 4.6 2.8 5.4 1.3" fill="none" stroke="currentColor" stroke-width="1.45" stroke-linecap="round"/></svg></span><span class="cl">Modified</span><span class="ct">modes, PrivacyTrust</span></div></div></div><div class="bi"><div class="bhd"><span class="bav" style="--c:#3b82f6"><svg width="7" height="7" viewBox="0 0 10 10"><path fill="#3b82f6" d="M5.00 0.10 L5.79 2.84 L8.15 1.25 L6.99 3.85 L9.83 4.15 L7.27 5.40 L9.24 7.45 L6.48 6.76 L6.68 9.60 L5.00 7.30 L3.32 9.60 L3.52 6.76 L0.76 7.45 L2.73 5.40 L0.17 4.15 L3.01 3.85 L1.85 1.25 L4.21 2.84Z"/><circle cx="5" cy="5" r="0.9" fill="#0c0c0c"/></svg></span><span class="s">s:</span><span class="bh">a74d557d</span><span class="ln">40 lines</span><span class="dd">.</span><span class="pgood">25%</span></div><div class="chgs"><div class="chg cm"><span class="ci"><svg class="tl" viewBox="0 0 6 4"><path d="M0.6 2.7 C1.4 1.2 2.3 1.2 3 2 C3.7 2.8 4.6 2.8 5.4 1.3" fill="none" stroke="currentColor" stroke-width="1.45" stroke-linecap="round"/></svg></span><span class="cl">Modified</span><span class="ct">Workflow</span></div><div class="chg cd"><span class="ci"><span class="mn"></span></span><span class="cl">Deleted</span><span class="ct">What 0.3 Adds</span></div></div></div><div class="bi"><div class="bhd"><span class="bav" style="--c:#22c55e"><svg width="7" height="7" viewBox="0 0 10 10"><path fill="#22c55e" d="M5.00 0.10 L5.79 2.84 L8.15 1.25 L6.99 3.85 L9.83 4.15 L7.27 5.40 L9.24 7.45 L6.48 6.76 L6.68 9.60 L5.00 7.30 L3.32 9.60 L3.52 6.76 L0.76 7.45 L2.73 5.40 L0.17 4.15 L3.01 3.85 L1.85 1.25 L4.21 2.84Z"/><circle cx="5" cy="5" r="0.9" fill="#0c0c0c"/></svg></span><span class="s">s:</span><span class="bh">b409108a</span><span class="ln">24 lines</span><span class="dd">.</span><span class="pbad">15%</span></div><div class="txt"><div>[24 lines</div><div>diffuse, 99e71951 dominates]</div></div></div><div class="bi"><div class="bhd"><span class="bav" style="--c:#f97316"><svg width="7" height="7" viewBox="0 0 10 10"><path fill="#f97316" d="M5.00 0.10 L5.79 2.84 L8.15 1.25 L6.99 3.85 L9.83 4.15 L7.27 5.40 L9.24 7.45 L6.48 6.76 L6.68 9.60 L5.00 7.30 L3.32 9.60 L3.52 6.76 L0.76 7.45 L2.73 5.40 L0.17 4.15 L3.01 3.85 L1.85 1.25 L4.21 2.84Z"/><circle cx="5" cy="5" r="0.9" fill="#0c0c0c"/></svg></span><span class="s">s:</span><span class="bh">f5c75bfe</span><span class="ln">5 lines</span><span class="dd">.</span><span class="pbad">3%</span></div><div class="chgs"><div class="chg cm"><span class="ci"><svg class="tl" viewBox="0 0 6 4"><path d="M0.6 2.7 C1.4 1.2 2.3 1.2 3 2 C3.7 2.8 4.6 2.8 5.4 1.3" fill="none" stroke="currentColor" stroke-width="1.45" stroke-linecap="round"/></svg></span><span class="cl">Modified</span><span class="ct">terminalSteps, agentSteps</span></div></div></div><div class="bi"><div class="bhd"><span class="bav" style="--c:#3b82f6"><svg width="7" height="7" viewBox="0 0 10 10"><path fill="#3b82f6" d="M5.00 0.10 L5.79 2.84 L8.15 1.25 L6.99 3.85 L9.83 4.15 L7.27 5.40 L9.24 7.45 L6.48 6.76 L6.68 9.60 L5.00 7.30 L3.32 9.60 L3.52 6.76 L0.76 7.45 L2.73 5.40 L0.17 4.15 L3.01 3.85 L1.85 1.25 L4.21 2.84Z"/><circle cx="5" cy="5" r="0.9" fill="#0c0c0c"/></svg></span><span class="s">s:</span><span class="bh">980a3dba</span><span class="ln">3 lines</span><span class="dd">.</span><span class="pbad">2%</span></div><div class="txt"><div>[3 lines</div><div>diffuse, 5392db8f dominates]</div></div></div><div class="bi"><div class="bhd"><span class="bav" style="--c:#22d3ee"><svg width="7" height="7" viewBox="0 0 10 10"><path fill="#22d3ee" d="M5.00 0.10 L5.79 2.84 L8.15 1.25 L6.99 3.85 L9.83 4.15 L7.27 5.40 L9.24 7.45 L6.48 6.76 L6.68 9.60 L5.00 7.30 L3.32 9.60 L3.52 6.76 L0.76 7.45 L2.73 5.40 L0.17 4.15 L3.01 3.85 L1.85 1.25 L4.21 2.84Z"/><circle cx="5" cy="5" r="0.9" fill="#0c0c0c"/></svg></span><span class="s">s:</span><span class="bh">6e158aac</span><span class="ln">1 lines</span><span class="dd">.</span><span class="pbad">1%</span></div><div class="chgs"><div class="chg cm"><span class="ci"><svg class="tl" viewBox="0 0 6 4"><path d="M0.6 2.7 C1.4 1.2 2.3 1.2 3 2 C3.7 2.8 4.6 2.8 5.4 1.3" fill="none" stroke="currentColor" stroke-width="1.45" stroke-linecap="round"/></svg></span><span class="cl">Modified</span><span class="ct">Footer</span></div></div></div></div>
    <div class="files"><div class="fh">Files:</div><div class="fr"><span class="fn">web/site/docs/docs/index.md</span><span class="fl">55 line(s)</span><span class="fa">(0 attributed)</span></div><div class="fr"><span class="fn">web/site/docs/docs/workflow/blame.md</span><span class="fl">207 line(s)</span><span class="fa">(0 attributed)</span></div><div class="fr"><span class="fn">web/site/src/components/Attribution.tsx</span><span class="fl">283 line(s)</span><span class="fa">(0 attributed)</span></div><div class="fr"><span class="fn">web/site/src/components/Dashboard.tsx</span><span class="fl">739 line(s)</span><span class="fa">(0 attributed)</span></div><div class="fr"><span class="fn">web/site/src/components/Footer.tsx</span><span class="fl">8 line(s)</span><span class="fa">(0 attributed)</span></div><div class="fr"><span class="fn">web/site/src/components/GetStart.tsx</span><span class="fl">71 line(s)</span><span class="fa">(0 attributed)</span></div></div>
  </div></div>
</div>
<div class="status"><span class="sg"><b>j/k</b> navigate</span><span class="sg"><b>enter</b> blame</span><span class="sg"><b>q</b> quit</span></div>
</div>
</body></html>
